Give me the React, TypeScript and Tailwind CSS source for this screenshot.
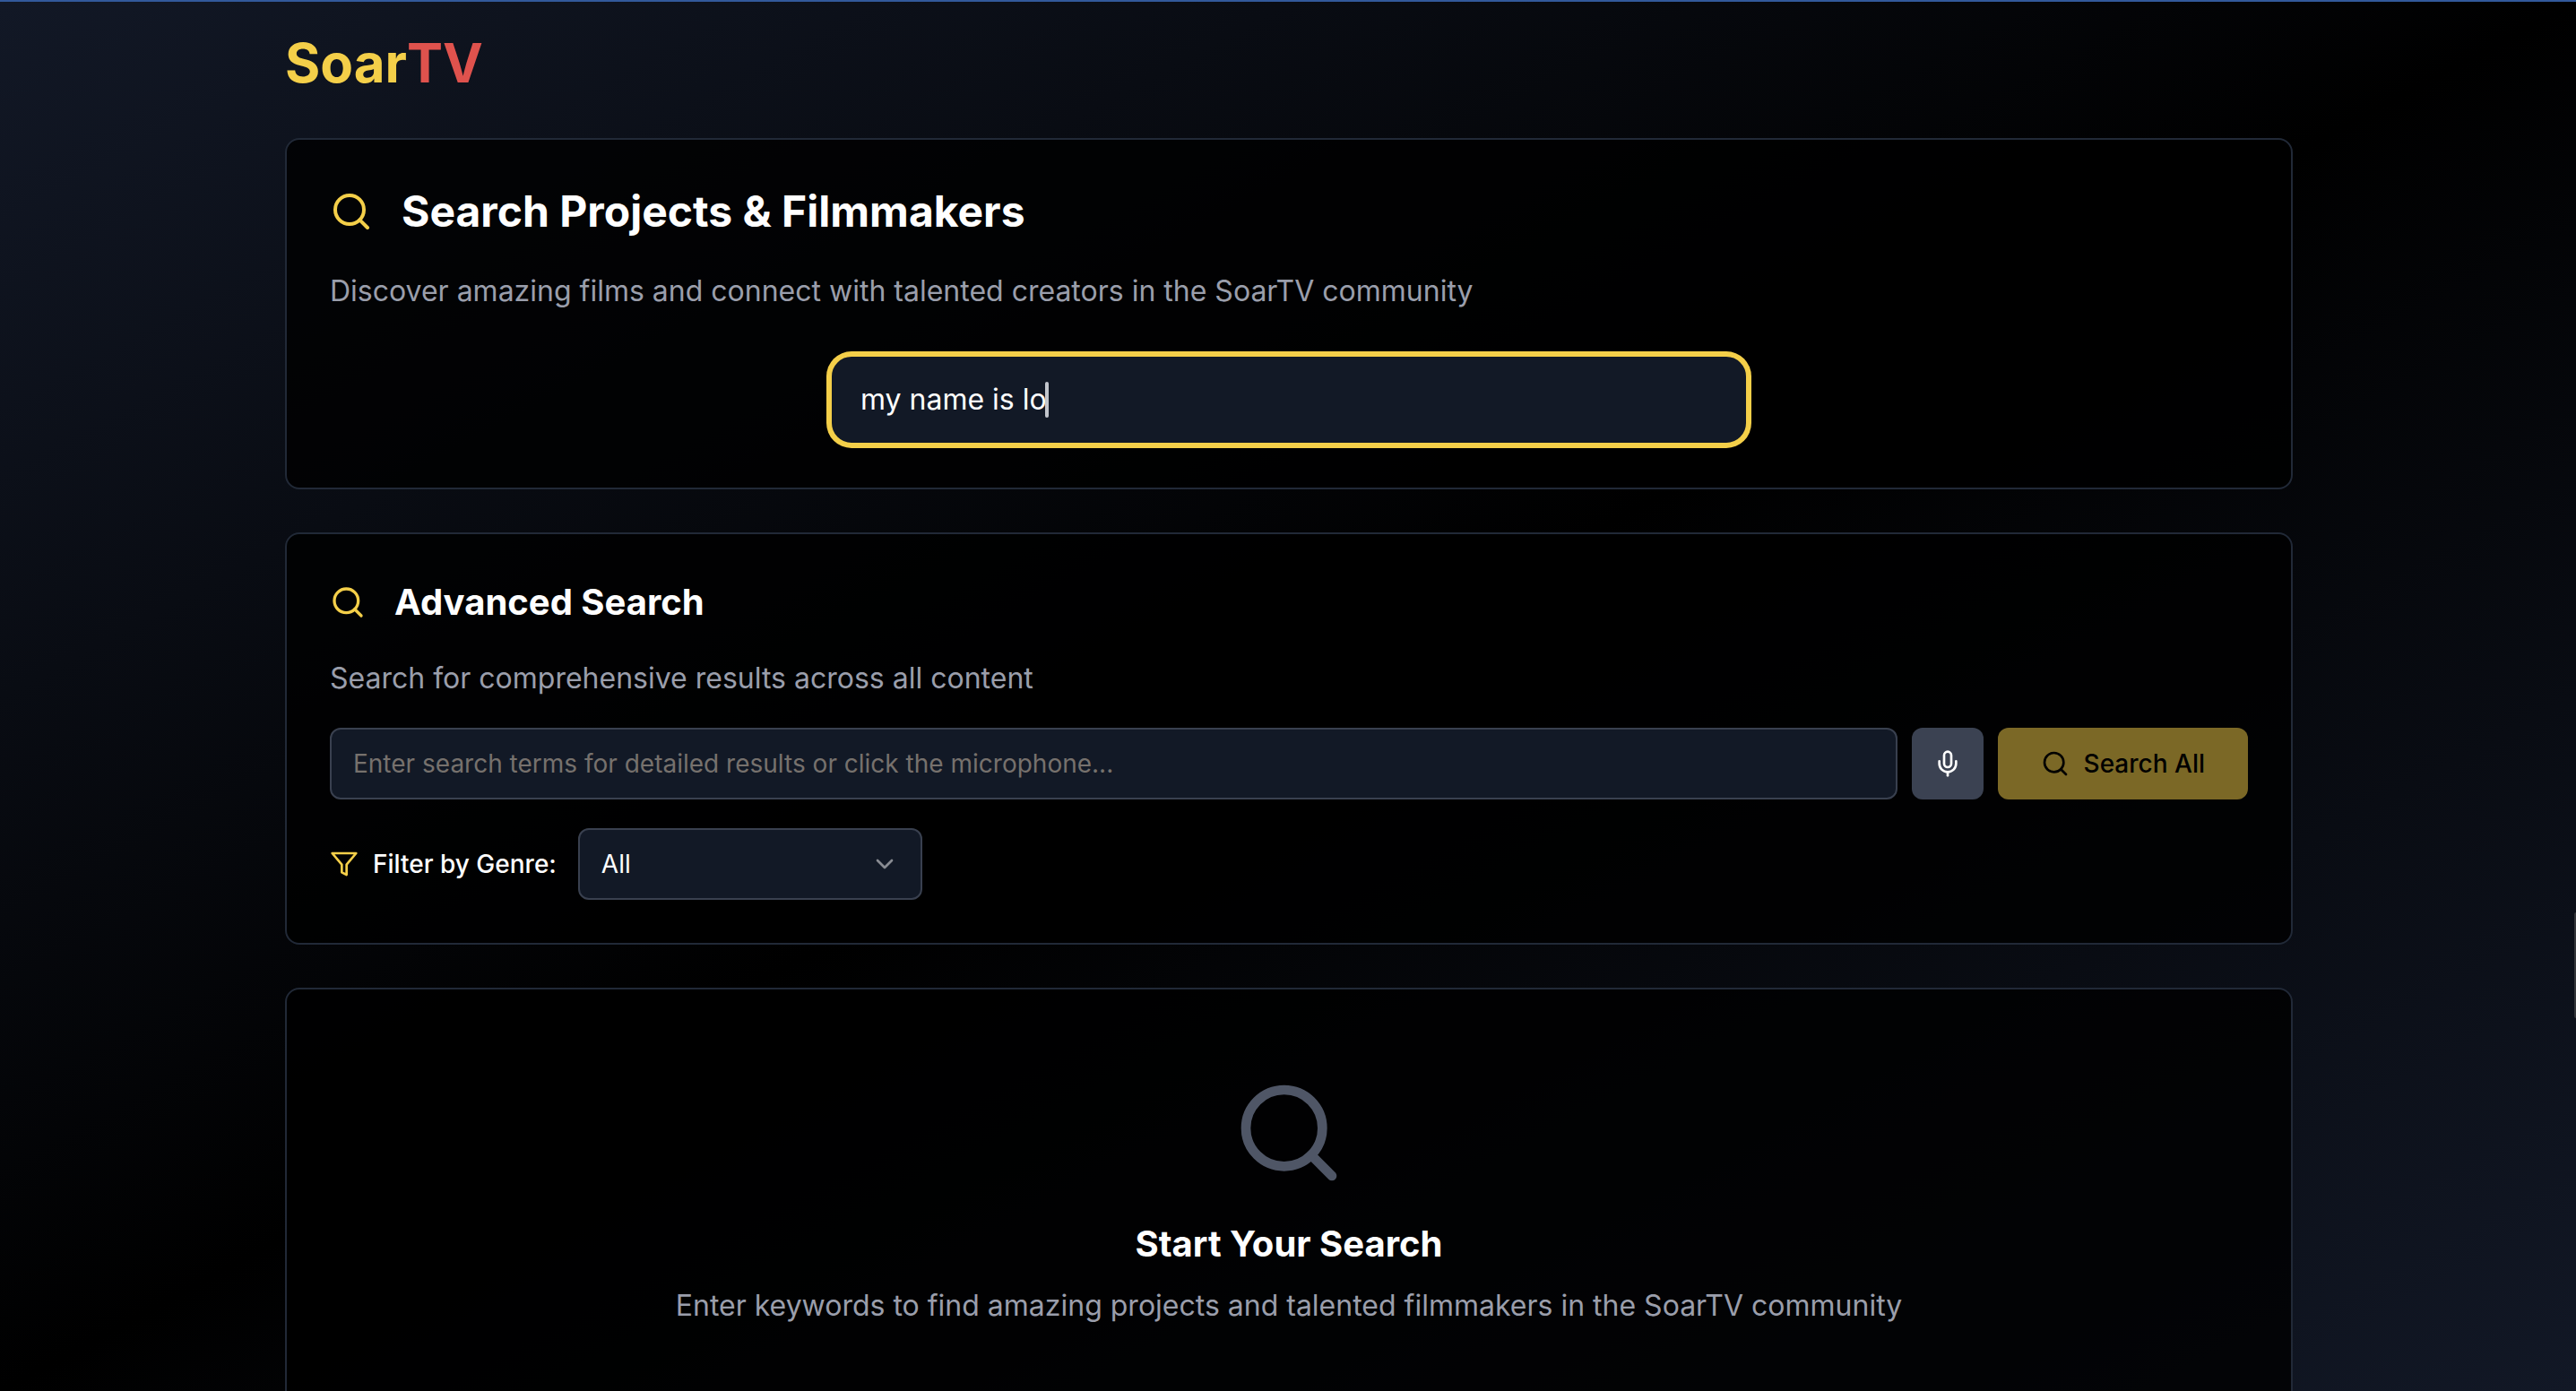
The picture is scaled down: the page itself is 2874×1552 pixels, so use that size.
import { useState, type ReactNode } from "react";
import { ChevronDown, Mic, Search } from "lucide-react";

const GENRES = ["All", "Action", "Comedy", "Documentary", "Drama", "Horror", "Sci-Fi"];

function FilterIcon({ className }: { className?: string }) {
  return (
    <svg
      className={className}
      viewBox="0 0 24 24"
      fill="none"
      stroke="currentColor"
      strokeWidth="2"
      strokeLinecap="round"
      strokeLinejoin="round"
      aria-hidden="true"
    >
      <polygon points="22 3 2 3 10 12.46 10 19 14 21 14 12.46 22 3" />
    </svg>
  );
}

function Card({ children }: { children: ReactNode }) {
  return (
    <section className="rounded-2xl border-2 border-[#212937] bg-black/80 p-12">{children}</section>
  );
}

export default function App() {
  const [query, setQuery] = useState("my name is lo");
  const [terms, setTerms] = useState("");
  const [genre, setGenre] = useState("All");

  return (
    <div className="relative h-screen overflow-hidden border-t-2 border-[#32599b] bg-[linear-gradient(to_bottom_right,#121826,#000000,#121826)] pl-0.5 font-['Inter',sans-serif] text-white [font-optical-sizing:none]">
      <div className="mx-auto max-w-[2304px] px-8 py-8">
        <header className="mb-12 text-[60px] leading-[72px] font-bold">
          <a href="#home" className="inline-flex">
            <span className="text-[#f4cf49]">Soar</span>
            <span className="text-[#df524d]">TV</span>
          </a>
        </header>

        <main className="flex flex-col gap-12">
          <Card>
            <h1 className="flex items-center gap-8 text-5xl leading-16 font-bold">
              <Search className="size-12 text-[#f4cf49]" />
              Search Projects &amp; Filmmakers
            </h1>
            <p className="mt-8 text-[32px] leading-[50px] text-[#9a9eab]">
              Discover amazing films and connect with talented creators in the SoarTV community
            </p>
            <div className="relative mx-auto mt-[46px] max-w-[1024px]">
              <input
                type="text"
                aria-label="Search projects and filmmakers"
                value={query}
                onChange={(e) => setQuery(e.target.value)}
                className="block w-full rounded-3xl border-2 border-[#f4cf49] bg-[#121926] px-8 py-6 text-[32px] leading-12 text-white ring-4 ring-[#f4cf49] outline-none"
              />
              <span
                aria-hidden="true"
                className="pointer-events-none absolute top-[30px] left-60 h-10 w-1 rounded-full bg-[#c2c5cc]"
              />
            </div>
          </Card>

          <Card>
            <h2 className="flex items-center gap-8 text-[40px] leading-14 font-bold">
              <Search className="size-10 text-[#f4cf49]" />
              Advanced Search
            </h2>
            <p className="mt-8 text-[32px] leading-[50px] text-[#9a9eab]">
              Search for comprehensive results across all content
            </p>
            <form className="mt-[30px] flex gap-4" onSubmit={(e) => e.preventDefault()}>
              <input
                type="text"
                aria-label="Search terms"
                value={terms}
                onChange={(e) => setTerms(e.target.value)}
                placeholder="Enter search terms for detailed results or click the microphone..."
                className="h-20 min-w-0 flex-1 rounded-xl border-2 border-[#39404f] bg-[#121926] px-6 text-[28px] leading-10 text-white placeholder:text-[#76716d]"
              />
              <button
                type="button"
                aria-label="Search by voice"
                className="flex size-20 items-center justify-center rounded-xl bg-[#3b4252] text-white"
              >
                <Mic className="size-8" />
              </button>
              <button
                type="submit"
                className="flex h-20 items-center gap-4 rounded-xl bg-[#7b6826] px-12 text-[28px] leading-10 font-medium text-black"
              >
                <Search className="size-8" />
                Search All
              </button>
            </form>
            <div className="mt-8 flex items-center gap-6">
              <label
                htmlFor="genre"
                className="flex items-center gap-4 text-[28px] leading-10 font-medium"
              >
                <FilterIcon className="size-8 text-[#f4cf49]" />
                Filter by Genre:
              </label>
              <div className="relative w-96">
                <select
                  id="genre"
                  value={genre}
                  onChange={(e) => setGenre(e.target.value)}
                  className="block h-20 w-full appearance-none rounded-xl border-2 border-[#39404f] bg-[#121926] px-6 text-[28px] leading-10 text-white"
                >
                  {GENRES.map((g) => (
                    <option key={g}>{g}</option>
                  ))}
                </select>
                <ChevronDown className="pointer-events-none absolute top-6 right-[26px] size-8 text-[#888b92]" />
              </div>
            </div>
          </Card>

          <Card>
            <div className="flex flex-col items-center py-12 text-center">
              <Search className="size-32 text-[#4f5666]" />
              <h2 className="mt-8 text-[40px] leading-14 font-bold">Start Your Search</h2>
              <p className="mt-4 text-[32px] leading-[50px] text-[#9a9eab]">
                Enter keywords to find amazing projects and talented filmmakers in the SoarTV
                community
              </p>
            </div>
          </Card>
        </main>
      </div>
      <span
        aria-hidden="true"
        className="absolute top-[1016px] right-0 h-[118px] w-0.5 rounded-l-full bg-[#34363a]"
      />
    </div>
  );
}
